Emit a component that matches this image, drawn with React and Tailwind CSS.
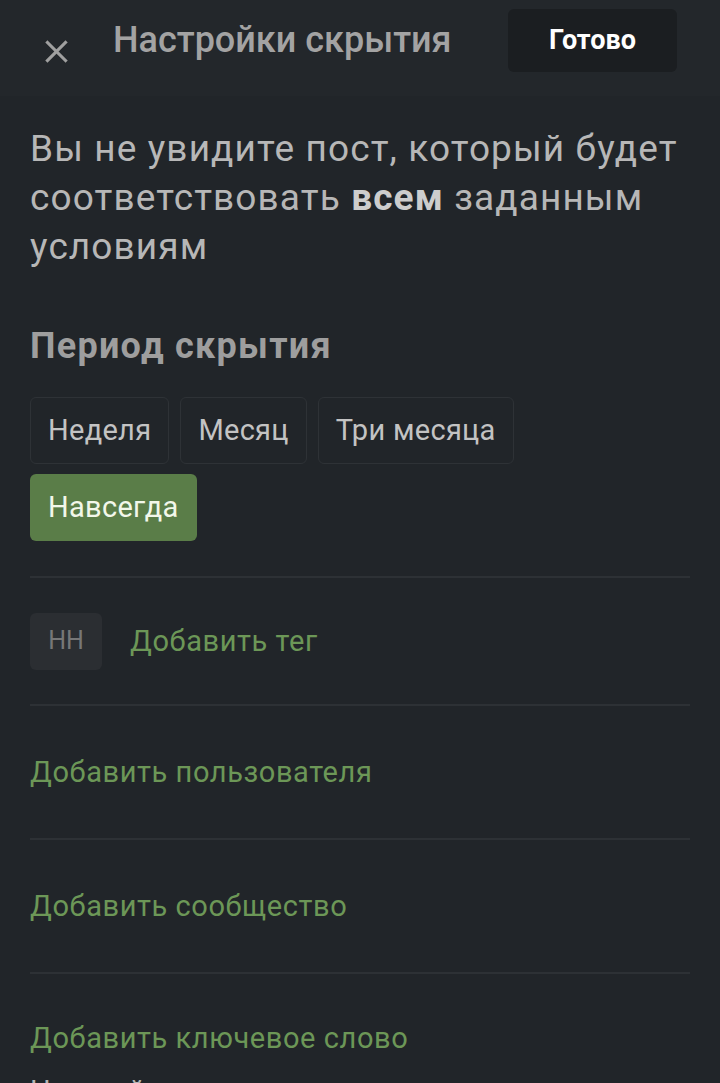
import React, { useState } from 'react'

const periods = ['Неделя', 'Месяц', 'Три месяца', 'Навсегда']

const AddRow = ({ label, className = 'h-[134px]', children }) => (
  <div className={'border-t-2 border-[#2d3135] flex items-center gap-7 ' + className}>
    {children}
    <span className="text-[29px] tracking-[0.02em] text-[#6c9757] leading-none">{label}</span>
  </div>
)

export default function App() {
  const [period, setPeriod] = useState('Навсегда')

  return (
    <div className="h-[1083px] bg-[#212529] text-[#b5b5b5] overflow-hidden" style={{ fontFamily: 'Roboto, "Noto Sans", sans-serif' }}>
      <header className="h-24 bg-[#23272b] flex items-start pt-[9px] pl-10 pr-[43px]">
        <button className="mt-[26px] w-8 h-8 flex items-center justify-center text-[#a0a0a0]">
          <svg width="27" height="27" viewBox="0 0 24 24" fill="none" stroke="currentColor" strokeWidth="2.8" strokeLinecap="square">
            <path d="M4 4l16 16M20 4L4 20" />
          </svg>
        </button>
        <h1 className="ml-[41px] mt-[13px] text-[36px] leading-none font-medium text-[#a3a3a3]">Настройки скрытия</h1>
        <button className="ml-auto w-[169px] h-[63px] rounded-md bg-[#1b1e21] text-white text-[27px] font-bold">
          Готово
        </button>
      </header>

      <main className="px-[30px]">
        <p className="mt-[28px] text-[37px] leading-[49px] tracking-[0.03em] text-[#b7b7b7]">
          Вы не увидите пост, который будет соответствовать <b className="font-bold text-[#cdcdcd]">всем</b> заданным условиям
        </p>

        <h2 className="mt-[48px] text-[36px] font-bold tracking-[0.035em] text-[#9e9e9e]">Период скрытия</h2>

        <div className="mt-[24px] flex flex-wrap gap-x-[11px] gap-y-[10px] pb-[35px]">
          {periods.map(p => (
            <button
              key={p}
              onClick={() => setPeriod(p)}
              className={
                p === period
                  ? 'h-[67px] px-[18px] rounded-md bg-[#5a7d48] text-[29px] tracking-[0.01em] text-[#f2f7ea]'
                  : 'h-[67px] px-[17px] rounded-md border border-[#2e3236] text-[29px] tracking-[0.01em] text-[#c3c3c3]'
              }
            >
              {p}
            </button>
          ))}
        </div>

        <AddRow label="Добавить тег" className="h-[128px]">
          <span className="w-[72px] h-[57px] rounded-md bg-[#2b2e32] flex items-center justify-center text-[25px] text-[#777]">НН</span>
        </AddRow>
        <AddRow label="Добавить пользователя" />
        <AddRow label="Добавить сообщество" />
        <AddRow label="Добавить ключевое слово" className="h-[105px] pt-[26px]" />
        <p className="text-[29px] leading-none text-[#b5b5b5]">Настройки скрытия применяются ко всем лентам</p>
      </main>
    </div>
  )
}
